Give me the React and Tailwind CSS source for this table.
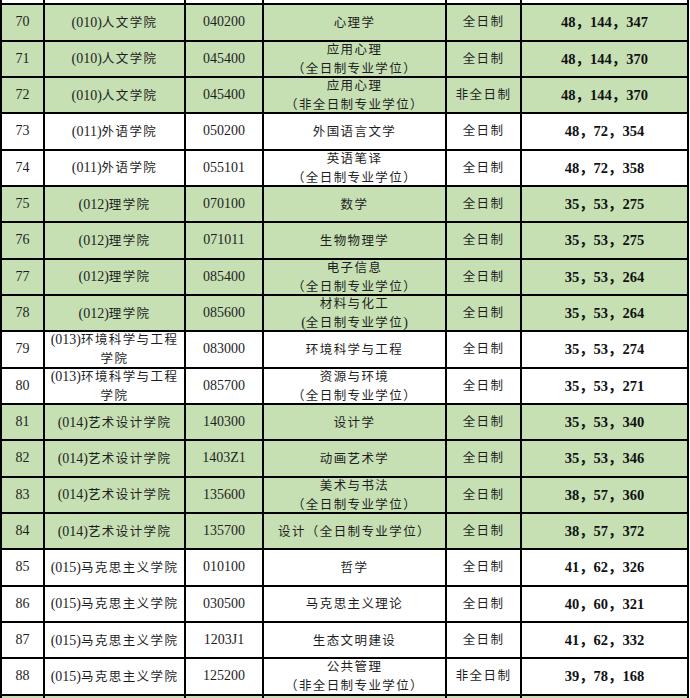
import React from "react";

const rows = [
  { no: "", college: [""], code: "", major: [""], type: "", score: "", green: false },
  { no: "70", college: ["(010)人文学院"], code: "040200", major: ["心理学"], type: "全日制", score: "48，144，347", green: true },
  { no: "71", college: ["(010)人文学院"], code: "045400", major: ["应用心理", "（全日制专业学位）"], type: "全日制", score: "48，144，370", green: true },
  { no: "72", college: ["(010)人文学院"], code: "045400", major: ["应用心理", "（非全日制专业学位）"], type: "非全日制", score: "48，144，370", green: true },
  { no: "73", college: ["(011)外语学院"], code: "050200", major: ["外国语言文学"], type: "全日制", score: "48，72，354", green: false },
  { no: "74", college: ["(011)外语学院"], code: "055101", major: ["英语笔译", "（全日制专业学位）"], type: "全日制", score: "48，72，358", green: false },
  { no: "75", college: ["(012)理学院"], code: "070100", major: ["数学"], type: "全日制", score: "35，53，275", green: true },
  { no: "76", college: ["(012)理学院"], code: "071011", major: ["生物物理学"], type: "全日制", score: "35，53，275", green: true },
  { no: "77", college: ["(012)理学院"], code: "085400", major: ["电子信息", "（全日制专业学位）"], type: "全日制", score: "35，53，264", green: true },
  { no: "78", college: ["(012)理学院"], code: "085600", major: ["材料与化工", "(全日制专业学位)"], type: "全日制", score: "35，53，264", green: true },
  { no: "79", college: ["(013)环境科学与工程", "学院"], code: "083000", major: ["环境科学与工程"], type: "全日制", score: "35，53，274", green: false },
  { no: "80", college: ["(013)环境科学与工程", "学院"], code: "085700", major: ["资源与环境", "（全日制专业学位）"], type: "全日制", score: "35，53，271", green: false },
  { no: "81", college: ["(014)艺术设计学院"], code: "140300", major: ["设计学"], type: "全日制", score: "35，53，340", green: true },
  { no: "82", college: ["(014)艺术设计学院"], code: "1403Z1", major: ["动画艺术学"], type: "全日制", score: "35，53，346", green: true },
  { no: "83", college: ["(014)艺术设计学院"], code: "135600", major: ["美术与书法", "（全日制专业学位）"], type: "全日制", score: "38，57，360", green: true },
  { no: "84", college: ["(014)艺术设计学院"], code: "135700", major: ["设计（全日制专业学位）"], type: "全日制", score: "38，57，372", green: true },
  { no: "85", college: ["(015)马克思主义学院"], code: "010100", major: ["哲学"], type: "全日制", score: "41，62，326", green: false },
  { no: "86", college: ["(015)马克思主义学院"], code: "030500", major: ["马克思主义理论"], type: "全日制", score: "40，60，321", green: false },
  { no: "87", college: ["(015)马克思主义学院"], code: "1203J1", major: ["生态文明建设"], type: "全日制", score: "41，62，332", green: false },
  { no: "88", college: ["(015)马克思主义学院"], code: "125200", major: ["公共管理", "（非全日制专业学位）"], type: "非全日制", score: "39，78，168", green: false },
  { no: "", college: [""], code: "", major: [""], type: "", score: "", green: true },
];

// split latin / cjk so only the chinese part gets the wide spacing
const Mixed = ({ text }) => {
  const parts = text.split(/([\u4e00-\u9fff\uff08\uff09\uff0c]+)/).filter(Boolean);
  return parts.map((p, i) =>
    /[\u4e00-\u9fff\uff08\uff09]/.test(p) ? (
      <span key={i} className="text-[12.5px] tracking-[1.4px]">{p}</span>
    ) : (
      <span key={i} className="text-[14px]">{p}</span>
    )
  );
};

const Cell = ({ green, children, className = "" }) => (
  <div
    className={`flex flex-col items-center justify-center text-center leading-[18px] text-[#1e1e1e] ${
      green ? "bg-[#c6e0b4]" : "bg-white"
    } ${className}`}
  >
    {children}
  </div>
);

const App = () => {
  return (
    <div
      className="w-[690px] h-[698px] overflow-hidden bg-white"
      style={{ fontFamily: '"Liberation Serif", "Noto Sans CJK SC", serif' }}
    >
      <div className="-mt-[31px] w-[689px] bg-black px-[2px] grid grid-cols-[41px_139px_76px_181px_73px_165px] auto-rows-[34.33px] gap-[2px]">
        {rows.map((r, idx) => (
          <React.Fragment key={idx}>
            <Cell green={r.green} className="text-[14px]">{r.no}</Cell>
            <Cell green={r.green}>
              {r.college.map((line, i) => (
                <div key={i}>
                  <Mixed text={line} />
                </div>
              ))}
            </Cell>
            <Cell green={r.green} className="text-[14px]">{r.code}</Cell>
            <Cell green={r.green}>
              {r.major.map((line, i) => (
                <div key={i}>
                  <Mixed text={line} />
                </div>
              ))}
            </Cell>
            <Cell green={r.green}>
              <Mixed text={r.type} />
            </Cell>
            <Cell green={r.green} className="text-[14.5px] font-bold text-[#111]">
              {r.score}
            </Cell>
          </React.Fragment>
        ))}
      </div>
    </div>
  );
};

export default App;
